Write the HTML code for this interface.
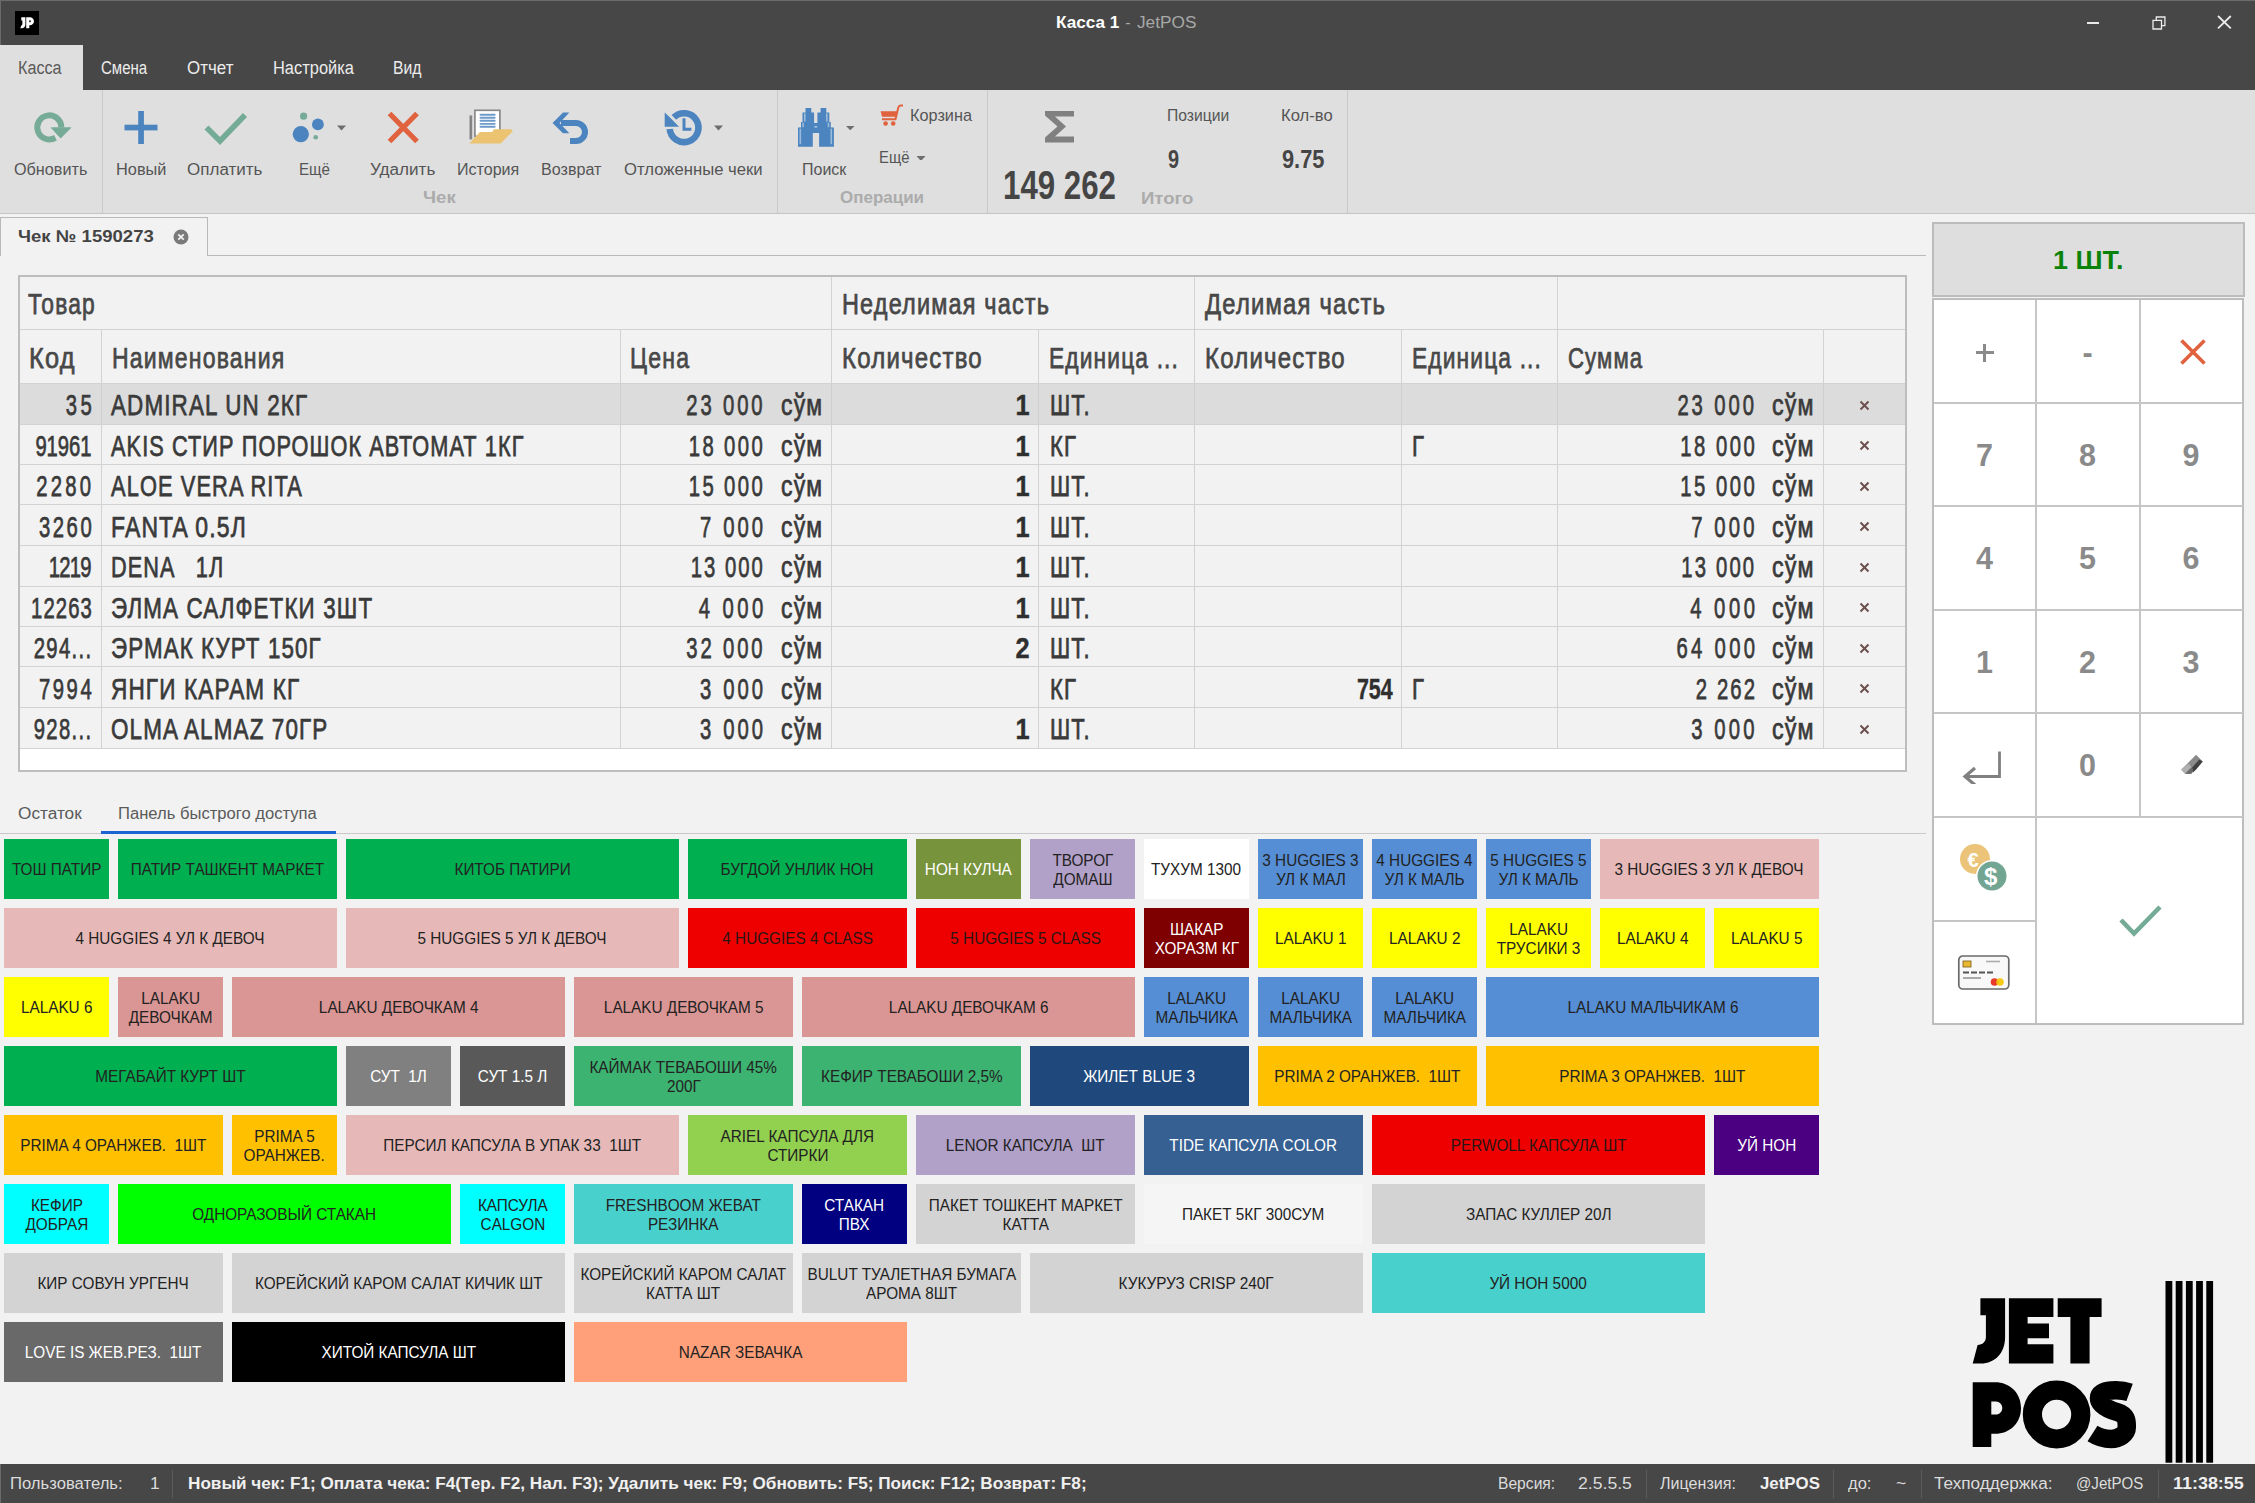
<!DOCTYPE html>
<html><head><meta charset="utf-8"><style>
html,body{margin:0;padding:0;width:2255px;height:1503px;overflow:hidden;background:#f2f2f2}
body{position:relative;font-family:"Liberation Sans",sans-serif}
body>div,body>svg{position:absolute}
.t{white-space:pre}
.t span{display:inline-block}
</style></head><body>
<div style="left:0px;top:0px;width:2255px;height:90px;background:#474747;"></div>
<div style="left:0px;top:0px;width:2255px;height:1px;background:#6a6a6a;"></div>
<div style="left:0px;top:0px;width:1px;height:90px;background:#6a6a6a;"></div>
<div style="left:15px;top:11px;width:24px;height:24px;background:#000;"></div>
<svg style="left:15px;top:11px" width="24" height="24" viewBox="15 11 24 24"><path d="M21.3 17.3H25.4V24.5C25.4 26.8 23.8 28.2 21.6 28.2H20.3L21.3 25.4C22 25.2 22.4 24.7 22.4 24V20.5H21.3Z" fill="#fff"/><path fill="#fff" fill-rule="evenodd" d="M26.2 17.3H29.8C32.3 17.3 34 19 34 21.3C34 23.6 32.3 25.3 29.8 25.3H29.3V28.2H26.2Z M29.3 20.3H29.7C30.4 20.3 30.9 20.8 30.9 21.3C30.9 21.8 30.4 22.3 29.7 22.3H29.3Z"/></svg>
<div class="t" style="left:1056.40px;top:14.56px;width:2000px;text-align:left;font-size:16px;line-height:16px;font-weight:bold;color:#ffffff;"><span style="transform:scaleX(1.0730);transform-origin:0 0">Касса 1</span></div>
<div class="t" style="left:1125.30px;top:14.56px;width:2000px;text-align:left;font-size:16px;line-height:16px;font-weight:normal;color:#a8a8a8;"><span style="transform:scaleX(1.0000);transform-origin:0 0">-</span></div>
<div class="t" style="left:1137.40px;top:14.56px;width:2000px;text-align:left;font-size:16px;line-height:16px;font-weight:normal;color:#a8a8a8;"><span style="transform:scaleX(1.0774);transform-origin:0 0">JetPOS</span></div>
<div style="left:2086.5px;top:22.3px;width:12.2px;height:1.8px;background:#e8e8e8;"></div>
<svg style="left:2150px;top:14px" width="18" height="18" viewBox="0 0 18 18"><path d="M3 6.4h8.5v8.6H3z M6.3 6.4V3h8.6v8.6h-3.4" fill="none" stroke="#ececec" stroke-width="1.3"/></svg>
<svg style="left:2214px;top:13.4px" width="18" height="18" viewBox="0 0 18 18"><path d="M4 3L16.8 15.3M16.8 3L4 15.3" stroke="#ececec" stroke-width="1.8"/></svg>
<div style="left:0px;top:45px;width:83px;height:45px;background:#dfdfdf;"></div>
<div class="t" style="left:18.40px;top:58.56px;width:2000px;text-align:left;font-size:18px;line-height:18px;font-weight:normal;color:#5a5a5a;"><span style="transform:scaleX(0.8989);transform-origin:0 0">Касса</span></div>
<div class="t" style="left:101.00px;top:58.56px;width:2000px;text-align:left;font-size:18px;line-height:18px;font-weight:normal;color:#ececec;"><span style="transform:scaleX(0.8349);transform-origin:0 0">Смена</span></div>
<div class="t" style="left:187.00px;top:58.56px;width:2000px;text-align:left;font-size:18px;line-height:18px;font-weight:normal;color:#ececec;"><span style="transform:scaleX(0.9416);transform-origin:0 0">Отчет</span></div>
<div class="t" style="left:273.10px;top:58.56px;width:2000px;text-align:left;font-size:18px;line-height:18px;font-weight:normal;color:#ececec;"><span style="transform:scaleX(0.9130);transform-origin:0 0">Настройка</span></div>
<div class="t" style="left:393.00px;top:58.56px;width:2000px;text-align:left;font-size:18px;line-height:18px;font-weight:normal;color:#ececec;"><span style="transform:scaleX(0.8722);transform-origin:0 0">Вид</span></div>
<div style="left:0px;top:90px;width:2255px;height:124px;background:#dfdfdf;"></div>
<div style="left:0px;top:213px;width:2255px;height:1px;background:#c4c4c4;"></div>
<div style="left:102px;top:90px;width:1px;height:123px;background:#c9c9c9;"></div>
<div style="left:777px;top:90px;width:1px;height:123px;background:#c9c9c9;"></div>
<div style="left:987px;top:90px;width:1px;height:123px;background:#c9c9c9;"></div>
<div style="left:1347px;top:90px;width:1px;height:123px;background:#c9c9c9;"></div>
<div class="t" style="left:13.60px;top:160.86px;width:2000px;text-align:left;font-size:17.3px;line-height:17.3px;font-weight:normal;color:#555555;"><span style="transform:scaleX(0.9371);transform-origin:0 0">Обновить</span></div>
<div class="t" style="left:115.50px;top:160.86px;width:2000px;text-align:left;font-size:17.3px;line-height:17.3px;font-weight:normal;color:#555555;"><span style="transform:scaleX(0.9456);transform-origin:0 0">Новый</span></div>
<div class="t" style="left:186.50px;top:160.86px;width:2000px;text-align:left;font-size:17.3px;line-height:17.3px;font-weight:normal;color:#555555;"><span style="transform:scaleX(0.9846);transform-origin:0 0">Оплатить</span></div>
<div class="t" style="left:299.00px;top:160.86px;width:2000px;text-align:left;font-size:17.3px;line-height:17.3px;font-weight:normal;color:#555555;"><span style="transform:scaleX(0.8758);transform-origin:0 0">Ещё</span></div>
<div class="t" style="left:370.00px;top:160.86px;width:2000px;text-align:left;font-size:17.3px;line-height:17.3px;font-weight:normal;color:#555555;"><span style="transform:scaleX(0.9902);transform-origin:0 0">Удалить</span></div>
<div class="t" style="left:456.90px;top:160.86px;width:2000px;text-align:left;font-size:17.3px;line-height:17.3px;font-weight:normal;color:#555555;"><span style="transform:scaleX(0.9287);transform-origin:0 0">История</span></div>
<div class="t" style="left:540.70px;top:160.86px;width:2000px;text-align:left;font-size:17.3px;line-height:17.3px;font-weight:normal;color:#555555;"><span style="transform:scaleX(0.9326);transform-origin:0 0">Возврат</span></div>
<div class="t" style="left:623.50px;top:160.86px;width:2000px;text-align:left;font-size:17.3px;line-height:17.3px;font-weight:normal;color:#555555;"><span style="transform:scaleX(0.9657);transform-origin:0 0">Отложенные чеки</span></div>
<div class="t" style="left:423.30px;top:189.21px;width:2000px;text-align:left;font-size:17px;line-height:17px;font-weight:bold;color:#ababab;"><span style="transform:scaleX(1.0934);transform-origin:0 0">Чек</span></div>
<div class="t" style="left:802.00px;top:160.86px;width:2000px;text-align:left;font-size:17.3px;line-height:17.3px;font-weight:normal;color:#555555;"><span style="transform:scaleX(0.9262);transform-origin:0 0">Поиск</span></div>
<div class="t" style="left:910.00px;top:107.21px;width:2000px;text-align:left;font-size:17px;line-height:17px;font-weight:normal;color:#555555;"><span style="transform:scaleX(0.9575);transform-origin:0 0">Корзина</span></div>
<div class="t" style="left:878.80px;top:149.21px;width:2000px;text-align:left;font-size:17px;line-height:17px;font-weight:normal;color:#555555;"><span style="transform:scaleX(0.8740);transform-origin:0 0">Ещё</span></div>
<div class="t" style="left:840.00px;top:189.41px;width:2000px;text-align:left;font-size:17px;line-height:17px;font-weight:bold;color:#ababab;"><span style="transform:scaleX(0.9984);transform-origin:0 0">Операции</span></div>
<div class="t" style="left:1141.30px;top:189.61px;width:2000px;text-align:left;font-size:17px;line-height:17px;font-weight:bold;color:#ababab;"><span style="transform:scaleX(1.0929);transform-origin:0 0">Итого</span></div>
<div class="t" style="left:1166.80px;top:107.11px;width:2000px;text-align:left;font-size:17px;line-height:17px;font-weight:normal;color:#555555;"><span style="transform:scaleX(0.9230);transform-origin:0 0">Позиции</span></div>
<div class="t" style="left:1280.70px;top:107.11px;width:2000px;text-align:left;font-size:17px;line-height:17px;font-weight:normal;color:#555555;"><span style="transform:scaleX(0.9763);transform-origin:0 0">Кол-во</span></div>
<div class="t" style="left:1002.50px;top:165.14px;width:2000px;text-align:left;font-size:40px;line-height:40px;font-weight:bold;color:#454545;"><span style="transform:scaleX(0.7816);transform-origin:0 0">149 262</span></div>
<div class="t" style="left:1167.60px;top:146.48px;width:2000px;text-align:left;font-size:26.6px;line-height:26.6px;font-weight:bold;color:#454545;"><span style="transform:scaleX(0.7504);transform-origin:0 0">9</span></div>
<div class="t" style="left:1281.90px;top:146.48px;width:2000px;text-align:left;font-size:26.6px;line-height:26.6px;font-weight:bold;color:#454545;"><span style="transform:scaleX(0.8191);transform-origin:0 0">9.75</span></div>
<div style="left:0px;top:214px;width:2255px;height:1250px;background:#f2f2f2;"></div>
<div style="left:0px;top:255px;width:1926px;height:1px;background:#b9b9b9;"></div>
<div style="left:0px;top:217px;width:208px;height:39px;background:#f2f2f2;border:1px solid #b9b9b9;border-bottom:none;box-sizing:border-box"></div>
<div class="t" style="left:18.00px;top:228.41px;width:2000px;text-align:left;font-size:17px;line-height:17px;font-weight:bold;color:#444;"><span style="transform:scaleX(1.0910);transform-origin:0 0">Чек № 1590273</span></div>
<svg style="left:173px;top:229px" width="16" height="16" viewBox="0 0 16 16"><circle cx="8" cy="8" r="7.5" fill="#7a7a7a"/><path d="M5.3 5.3L10.7 10.7M10.7 5.3L5.3 10.7" stroke="#f2f2f2" stroke-width="1.8"/></svg>
<div style="left:18px;top:275px;width:1889px;height:497px;background:#f2f2f2;border:2px solid #bdbdbd;box-sizing:border-box"></div>
<div style="left:20px;top:748px;width:1885px;height:22px;background:#ffffff;"></div>
<div style="left:20px;top:329px;width:1885px;height:1px;background:#d2d2d2;"></div>
<div style="left:20px;top:383px;width:1885px;height:1px;background:#d2d2d2;"></div>
<div style="left:831px;top:277px;width:1px;height:52px;background:#d2d2d2;"></div>
<div style="left:1194px;top:277px;width:1px;height:52px;background:#d2d2d2;"></div>
<div style="left:1557px;top:277px;width:1px;height:52px;background:#d2d2d2;"></div>
<div style="left:101px;top:330px;width:1px;height:418px;background:#d2d2d2;"></div>
<div style="left:620px;top:330px;width:1px;height:418px;background:#d2d2d2;"></div>
<div style="left:831px;top:330px;width:1px;height:418px;background:#d2d2d2;"></div>
<div style="left:1038px;top:330px;width:1px;height:418px;background:#d2d2d2;"></div>
<div style="left:1194px;top:330px;width:1px;height:418px;background:#d2d2d2;"></div>
<div style="left:1401px;top:330px;width:1px;height:418px;background:#d2d2d2;"></div>
<div style="left:1557px;top:330px;width:1px;height:418px;background:#d2d2d2;"></div>
<div style="left:1823px;top:330px;width:1px;height:418px;background:#d2d2d2;"></div>
<div style="left:20px;top:384px;width:1885px;height:40px;background:#dcdcdc"></div>
<div style="left:101px;top:384px;width:1px;height:40px;background:#cfcfcf;"></div>
<div style="left:620px;top:384px;width:1px;height:40px;background:#cfcfcf;"></div>
<div style="left:831px;top:384px;width:1px;height:40px;background:#cfcfcf;"></div>
<div style="left:1038px;top:384px;width:1px;height:40px;background:#cfcfcf;"></div>
<div style="left:1194px;top:384px;width:1px;height:40px;background:#cfcfcf;"></div>
<div style="left:1401px;top:384px;width:1px;height:40px;background:#cfcfcf;"></div>
<div style="left:1557px;top:384px;width:1px;height:40px;background:#cfcfcf;"></div>
<div style="left:1823px;top:384px;width:1px;height:40px;background:#cfcfcf;"></div>
<div style="left:20px;top:424px;width:1885px;height:1px;background:#d2d2d2;"></div>
<div style="left:20px;top:464px;width:1885px;height:1px;background:#d2d2d2;"></div>
<div style="left:20px;top:504px;width:1885px;height:1px;background:#d2d2d2;"></div>
<div style="left:20px;top:545px;width:1885px;height:1px;background:#d2d2d2;"></div>
<div style="left:20px;top:586px;width:1885px;height:1px;background:#d2d2d2;"></div>
<div style="left:20px;top:626px;width:1885px;height:1px;background:#d2d2d2;"></div>
<div style="left:20px;top:666px;width:1885px;height:1px;background:#d2d2d2;"></div>
<div style="left:20px;top:707px;width:1885px;height:1px;background:#d2d2d2;"></div>
<div style="left:20px;top:748px;width:1885px;height:1px;background:#d2d2d2;"></div>
<div class="t" style="left:-1905.04px;top:390.27px;width:2000px;text-align:right;font-size:29.8px;line-height:29.8px;font-weight:normal;color:#3a3a3a;letter-spacing:5.092px;-webkit-text-stroke:0.75px #3a3a3a"><span style="transform:scaleX(0.6800);transform-origin:100% 0">35</span></div>
<div class="t" style="left:111.40px;top:390.27px;width:2000px;text-align:left;font-size:29.8px;line-height:29.8px;font-weight:normal;color:#3a3a3a;letter-spacing:1.500px;-webkit-text-stroke:0.75px #3a3a3a"><span style="transform:scaleX(0.7531);transform-origin:0 0">ADMIRAL UN 2КГ</span></div>
<div class="t" style="left:-1234.43px;top:390.27px;width:2000px;text-align:right;font-size:29.8px;line-height:29.8px;font-weight:normal;color:#3a3a3a;letter-spacing:4.214px;-webkit-text-stroke:0.75px #3a3a3a"><span style="transform:scaleX(0.6800);transform-origin:100% 0">23 000</span></div>
<div class="t" style="left:780.80px;top:390.27px;width:2000px;text-align:left;font-size:29.8px;line-height:29.8px;font-weight:normal;color:#3a3a3a;letter-spacing:1.500px;-webkit-text-stroke:0.75px #3a3a3a"><span style="transform:scaleX(0.7713);transform-origin:0 0">сўм</span></div>
<div class="t" style="left:-970.50px;top:390.27px;width:2000px;text-align:right;font-size:29.8px;line-height:29.8px;font-weight:bold;color:#2f2f2f;-webkit-text-stroke:0.4px #2f2f2f"><span style="transform:scaleX(0.8500);transform-origin:100% 0">1</span></div>
<div class="t" style="left:1050.10px;top:390.27px;width:2000px;text-align:left;font-size:29.8px;line-height:29.8px;font-weight:normal;color:#3a3a3a;letter-spacing:1.500px;-webkit-text-stroke:0.75px #3a3a3a"><span style="transform:scaleX(0.7400);transform-origin:0 0">ШТ.</span></div>
<div class="t" style="left:-242.57px;top:390.27px;width:2000px;text-align:right;font-size:29.8px;line-height:29.8px;font-weight:normal;color:#3a3a3a;letter-spacing:4.302px;-webkit-text-stroke:0.75px #3a3a3a"><span style="transform:scaleX(0.6800);transform-origin:100% 0">23 000</span></div>
<div class="t" style="left:1771.70px;top:390.27px;width:2000px;text-align:left;font-size:29.8px;line-height:29.8px;font-weight:normal;color:#3a3a3a;letter-spacing:1.500px;-webkit-text-stroke:0.75px #3a3a3a"><span style="transform:scaleX(0.7807);transform-origin:0 0">сўм</span></div>
<svg style="left:1859px;top:399.5px" width="11" height="11" viewBox="0 0 11 11"><path d="M1.5 1.5L9.5 9.5M9.5 1.5L1.5 9.5" stroke="#6e4f4f" stroke-width="2"/></svg>
<div class="t" style="left:-1908.56px;top:430.77px;width:2000px;text-align:right;font-size:29.8px;line-height:29.8px;font-weight:normal;color:#3a3a3a;letter-spacing:-0.089px;-webkit-text-stroke:0.75px #3a3a3a"><span style="transform:scaleX(0.6800);transform-origin:100% 0">91961</span></div>
<div class="t" style="left:111.40px;top:430.77px;width:2000px;text-align:left;font-size:29.8px;line-height:29.8px;font-weight:normal;color:#3a3a3a;letter-spacing:1.500px;-webkit-text-stroke:0.75px #3a3a3a"><span style="transform:scaleX(0.7283);transform-origin:0 0">AKIS СТИР ПОРОШОК АВТОМАТ 1КГ</span></div>
<div class="t" style="left:-1234.93px;top:430.77px;width:2000px;text-align:right;font-size:29.8px;line-height:29.8px;font-weight:normal;color:#3a3a3a;letter-spacing:3.479px;-webkit-text-stroke:0.75px #3a3a3a"><span style="transform:scaleX(0.6800);transform-origin:100% 0">18 000</span></div>
<div class="t" style="left:780.80px;top:430.77px;width:2000px;text-align:left;font-size:29.8px;line-height:29.8px;font-weight:normal;color:#3a3a3a;letter-spacing:1.500px;-webkit-text-stroke:0.75px #3a3a3a"><span style="transform:scaleX(0.7713);transform-origin:0 0">сўм</span></div>
<div class="t" style="left:-970.50px;top:430.77px;width:2000px;text-align:right;font-size:29.8px;line-height:29.8px;font-weight:bold;color:#2f2f2f;-webkit-text-stroke:0.4px #2f2f2f"><span style="transform:scaleX(0.8500);transform-origin:100% 0">1</span></div>
<div class="t" style="left:1050.10px;top:430.77px;width:2000px;text-align:left;font-size:29.8px;line-height:29.8px;font-weight:normal;color:#3a3a3a;letter-spacing:1.500px;-webkit-text-stroke:0.75px #3a3a3a"><span style="transform:scaleX(0.7400);transform-origin:0 0">КГ</span></div>
<div class="t" style="left:1411.90px;top:430.77px;width:2000px;text-align:left;font-size:29.8px;line-height:29.8px;font-weight:normal;color:#3a3a3a;letter-spacing:1.500px;-webkit-text-stroke:0.75px #3a3a3a"><span style="transform:scaleX(0.7400);transform-origin:0 0">Г</span></div>
<div class="t" style="left:-242.99px;top:430.77px;width:2000px;text-align:right;font-size:29.8px;line-height:29.8px;font-weight:normal;color:#3a3a3a;letter-spacing:3.684px;-webkit-text-stroke:0.75px #3a3a3a"><span style="transform:scaleX(0.6800);transform-origin:100% 0">18 000</span></div>
<div class="t" style="left:1771.70px;top:430.77px;width:2000px;text-align:left;font-size:29.8px;line-height:29.8px;font-weight:normal;color:#3a3a3a;letter-spacing:1.500px;-webkit-text-stroke:0.75px #3a3a3a"><span style="transform:scaleX(0.7807);transform-origin:0 0">сўм</span></div>
<svg style="left:1859px;top:440.0px" width="11" height="11" viewBox="0 0 11 11"><path d="M1.5 1.5L9.5 9.5M9.5 1.5L1.5 9.5" stroke="#6e4f4f" stroke-width="2"/></svg>
<div class="t" style="left:-1905.26px;top:471.27px;width:2000px;text-align:right;font-size:29.8px;line-height:29.8px;font-weight:normal;color:#3a3a3a;letter-spacing:4.767px;-webkit-text-stroke:0.75px #3a3a3a"><span style="transform:scaleX(0.6800);transform-origin:100% 0">2280</span></div>
<div class="t" style="left:111.40px;top:471.27px;width:2000px;text-align:left;font-size:29.8px;line-height:29.8px;font-weight:normal;color:#3a3a3a;letter-spacing:1.500px;-webkit-text-stroke:0.75px #3a3a3a"><span style="transform:scaleX(0.7321);transform-origin:0 0">ALOE VERA RITA</span></div>
<div class="t" style="left:-1234.93px;top:471.27px;width:2000px;text-align:right;font-size:29.8px;line-height:29.8px;font-weight:normal;color:#3a3a3a;letter-spacing:3.479px;-webkit-text-stroke:0.75px #3a3a3a"><span style="transform:scaleX(0.6800);transform-origin:100% 0">15 000</span></div>
<div class="t" style="left:780.80px;top:471.27px;width:2000px;text-align:left;font-size:29.8px;line-height:29.8px;font-weight:normal;color:#3a3a3a;letter-spacing:1.500px;-webkit-text-stroke:0.75px #3a3a3a"><span style="transform:scaleX(0.7713);transform-origin:0 0">сўм</span></div>
<div class="t" style="left:-970.50px;top:471.27px;width:2000px;text-align:right;font-size:29.8px;line-height:29.8px;font-weight:bold;color:#2f2f2f;-webkit-text-stroke:0.4px #2f2f2f"><span style="transform:scaleX(0.8500);transform-origin:100% 0">1</span></div>
<div class="t" style="left:1050.10px;top:471.27px;width:2000px;text-align:left;font-size:29.8px;line-height:29.8px;font-weight:normal;color:#3a3a3a;letter-spacing:1.500px;-webkit-text-stroke:0.75px #3a3a3a"><span style="transform:scaleX(0.7400);transform-origin:0 0">ШТ.</span></div>
<div class="t" style="left:-242.99px;top:471.27px;width:2000px;text-align:right;font-size:29.8px;line-height:29.8px;font-weight:normal;color:#3a3a3a;letter-spacing:3.684px;-webkit-text-stroke:0.75px #3a3a3a"><span style="transform:scaleX(0.6800);transform-origin:100% 0">15 000</span></div>
<div class="t" style="left:1771.70px;top:471.27px;width:2000px;text-align:left;font-size:29.8px;line-height:29.8px;font-weight:normal;color:#3a3a3a;letter-spacing:1.500px;-webkit-text-stroke:0.75px #3a3a3a"><span style="transform:scaleX(0.7807);transform-origin:0 0">сўм</span></div>
<svg style="left:1859px;top:480.5px" width="11" height="11" viewBox="0 0 11 11"><path d="M1.5 1.5L9.5 9.5M9.5 1.5L1.5 9.5" stroke="#6e4f4f" stroke-width="2"/></svg>
<div class="t" style="left:-1905.96px;top:511.77px;width:2000px;text-align:right;font-size:29.8px;line-height:29.8px;font-weight:normal;color:#3a3a3a;letter-spacing:3.738px;-webkit-text-stroke:0.75px #3a3a3a"><span style="transform:scaleX(0.6800);transform-origin:100% 0">3260</span></div>
<div class="t" style="left:111.40px;top:511.77px;width:2000px;text-align:left;font-size:29.8px;line-height:29.8px;font-weight:normal;color:#3a3a3a;letter-spacing:1.500px;-webkit-text-stroke:0.75px #3a3a3a"><span style="transform:scaleX(0.7706);transform-origin:0 0">FANTA 0.5Л</span></div>
<div class="t" style="left:-1234.23px;top:511.77px;width:2000px;text-align:right;font-size:29.8px;line-height:29.8px;font-weight:normal;color:#3a3a3a;letter-spacing:4.520px;-webkit-text-stroke:0.75px #3a3a3a"><span style="transform:scaleX(0.6800);transform-origin:100% 0">7 000</span></div>
<div class="t" style="left:780.80px;top:511.77px;width:2000px;text-align:left;font-size:29.8px;line-height:29.8px;font-weight:normal;color:#3a3a3a;letter-spacing:1.500px;-webkit-text-stroke:0.75px #3a3a3a"><span style="transform:scaleX(0.7713);transform-origin:0 0">сўм</span></div>
<div class="t" style="left:-970.50px;top:511.77px;width:2000px;text-align:right;font-size:29.8px;line-height:29.8px;font-weight:bold;color:#2f2f2f;-webkit-text-stroke:0.4px #2f2f2f"><span style="transform:scaleX(0.8500);transform-origin:100% 0">1</span></div>
<div class="t" style="left:1050.10px;top:511.77px;width:2000px;text-align:left;font-size:29.8px;line-height:29.8px;font-weight:normal;color:#3a3a3a;letter-spacing:1.500px;-webkit-text-stroke:0.75px #3a3a3a"><span style="transform:scaleX(0.7400);transform-origin:0 0">ШТ.</span></div>
<div class="t" style="left:-242.38px;top:511.77px;width:2000px;text-align:right;font-size:29.8px;line-height:29.8px;font-weight:normal;color:#3a3a3a;letter-spacing:4.594px;-webkit-text-stroke:0.75px #3a3a3a"><span style="transform:scaleX(0.6800);transform-origin:100% 0">7 000</span></div>
<div class="t" style="left:1771.70px;top:511.77px;width:2000px;text-align:left;font-size:29.8px;line-height:29.8px;font-weight:normal;color:#3a3a3a;letter-spacing:1.500px;-webkit-text-stroke:0.75px #3a3a3a"><span style="transform:scaleX(0.7807);transform-origin:0 0">сўм</span></div>
<svg style="left:1859px;top:521.0px" width="11" height="11" viewBox="0 0 11 11"><path d="M1.5 1.5L9.5 9.5M9.5 1.5L1.5 9.5" stroke="#6e4f4f" stroke-width="2"/></svg>
<div class="t" style="left:-1909.26px;top:552.27px;width:2000px;text-align:right;font-size:29.8px;line-height:29.8px;font-weight:normal;color:#3a3a3a;letter-spacing:-1.115px;-webkit-text-stroke:0.75px #3a3a3a"><span style="transform:scaleX(0.6800);transform-origin:100% 0">1219</span></div>
<div class="t" style="left:111.40px;top:552.27px;width:2000px;text-align:left;font-size:29.8px;line-height:29.8px;font-weight:normal;color:#3a3a3a;letter-spacing:1.500px;-webkit-text-stroke:0.75px #3a3a3a"><span style="transform:scaleX(0.7280);transform-origin:0 0">DENA   1Л</span></div>
<div class="t" style="left:-1235.29px;top:552.27px;width:2000px;text-align:right;font-size:29.8px;line-height:29.8px;font-weight:normal;color:#3a3a3a;letter-spacing:2.949px;-webkit-text-stroke:0.75px #3a3a3a"><span style="transform:scaleX(0.6800);transform-origin:100% 0">13 000</span></div>
<div class="t" style="left:780.80px;top:552.27px;width:2000px;text-align:left;font-size:29.8px;line-height:29.8px;font-weight:normal;color:#3a3a3a;letter-spacing:1.500px;-webkit-text-stroke:0.75px #3a3a3a"><span style="transform:scaleX(0.7713);transform-origin:0 0">сўм</span></div>
<div class="t" style="left:-970.50px;top:552.27px;width:2000px;text-align:right;font-size:29.8px;line-height:29.8px;font-weight:bold;color:#2f2f2f;-webkit-text-stroke:0.4px #2f2f2f"><span style="transform:scaleX(0.8500);transform-origin:100% 0">1</span></div>
<div class="t" style="left:1050.10px;top:552.27px;width:2000px;text-align:left;font-size:29.8px;line-height:29.8px;font-weight:normal;color:#3a3a3a;letter-spacing:1.500px;-webkit-text-stroke:0.75px #3a3a3a"><span style="transform:scaleX(0.7400);transform-origin:0 0">ШТ.</span></div>
<div class="t" style="left:-243.33px;top:552.27px;width:2000px;text-align:right;font-size:29.8px;line-height:29.8px;font-weight:normal;color:#3a3a3a;letter-spacing:3.184px;-webkit-text-stroke:0.75px #3a3a3a"><span style="transform:scaleX(0.6800);transform-origin:100% 0">13 000</span></div>
<div class="t" style="left:1771.70px;top:552.27px;width:2000px;text-align:left;font-size:29.8px;line-height:29.8px;font-weight:normal;color:#3a3a3a;letter-spacing:1.500px;-webkit-text-stroke:0.75px #3a3a3a"><span style="transform:scaleX(0.7807);transform-origin:0 0">сўм</span></div>
<svg style="left:1859px;top:561.5px" width="11" height="11" viewBox="0 0 11 11"><path d="M1.5 1.5L9.5 9.5M9.5 1.5L1.5 9.5" stroke="#6e4f4f" stroke-width="2"/></svg>
<div class="t" style="left:-1907.41px;top:592.77px;width:2000px;text-align:right;font-size:29.8px;line-height:29.8px;font-weight:normal;color:#3a3a3a;letter-spacing:1.602px;-webkit-text-stroke:0.75px #3a3a3a"><span style="transform:scaleX(0.6800);transform-origin:100% 0">12263</span></div>
<div class="t" style="left:111.40px;top:592.77px;width:2000px;text-align:left;font-size:29.8px;line-height:29.8px;font-weight:normal;color:#3a3a3a;letter-spacing:1.500px;-webkit-text-stroke:0.75px #3a3a3a"><span style="transform:scaleX(0.7514);transform-origin:0 0">ЭЛМА САЛФЕТКИ 3ШТ</span></div>
<div class="t" style="left:-1233.90px;top:592.77px;width:2000px;text-align:right;font-size:29.8px;line-height:29.8px;font-weight:normal;color:#3a3a3a;letter-spacing:4.998px;-webkit-text-stroke:0.75px #3a3a3a"><span style="transform:scaleX(0.6800);transform-origin:100% 0">4 000</span></div>
<div class="t" style="left:780.80px;top:592.77px;width:2000px;text-align:left;font-size:29.8px;line-height:29.8px;font-weight:normal;color:#3a3a3a;letter-spacing:1.500px;-webkit-text-stroke:0.75px #3a3a3a"><span style="transform:scaleX(0.7713);transform-origin:0 0">сўм</span></div>
<div class="t" style="left:-970.50px;top:592.77px;width:2000px;text-align:right;font-size:29.8px;line-height:29.8px;font-weight:bold;color:#2f2f2f;-webkit-text-stroke:0.4px #2f2f2f"><span style="transform:scaleX(0.8500);transform-origin:100% 0">1</span></div>
<div class="t" style="left:1050.10px;top:592.77px;width:2000px;text-align:left;font-size:29.8px;line-height:29.8px;font-weight:normal;color:#3a3a3a;letter-spacing:1.500px;-webkit-text-stroke:0.75px #3a3a3a"><span style="transform:scaleX(0.7400);transform-origin:0 0">ШТ.</span></div>
<div class="t" style="left:-241.98px;top:592.77px;width:2000px;text-align:right;font-size:29.8px;line-height:29.8px;font-weight:normal;color:#3a3a3a;letter-spacing:5.182px;-webkit-text-stroke:0.75px #3a3a3a"><span style="transform:scaleX(0.6800);transform-origin:100% 0">4 000</span></div>
<div class="t" style="left:1771.70px;top:592.77px;width:2000px;text-align:left;font-size:29.8px;line-height:29.8px;font-weight:normal;color:#3a3a3a;letter-spacing:1.500px;-webkit-text-stroke:0.75px #3a3a3a"><span style="transform:scaleX(0.7807);transform-origin:0 0">сўм</span></div>
<svg style="left:1859px;top:602.0px" width="11" height="11" viewBox="0 0 11 11"><path d="M1.5 1.5L9.5 9.5M9.5 1.5L1.5 9.5" stroke="#6e4f4f" stroke-width="2"/></svg>
<div class="t" style="left:-1907.14px;top:633.27px;width:2000px;text-align:right;font-size:29.8px;line-height:29.8px;font-weight:normal;color:#3a3a3a;letter-spacing:2.002px;-webkit-text-stroke:0.75px #3a3a3a"><span style="transform:scaleX(0.6800);transform-origin:100% 0">294...</span></div>
<div class="t" style="left:111.40px;top:633.27px;width:2000px;text-align:left;font-size:29.8px;line-height:29.8px;font-weight:normal;color:#3a3a3a;letter-spacing:1.500px;-webkit-text-stroke:0.75px #3a3a3a"><span style="transform:scaleX(0.7491);transform-origin:0 0">ЭРМАК КУРТ 150Г</span></div>
<div class="t" style="left:-1234.43px;top:633.27px;width:2000px;text-align:right;font-size:29.8px;line-height:29.8px;font-weight:normal;color:#3a3a3a;letter-spacing:4.214px;-webkit-text-stroke:0.75px #3a3a3a"><span style="transform:scaleX(0.6800);transform-origin:100% 0">32 000</span></div>
<div class="t" style="left:780.80px;top:633.27px;width:2000px;text-align:left;font-size:29.8px;line-height:29.8px;font-weight:normal;color:#3a3a3a;letter-spacing:1.500px;-webkit-text-stroke:0.75px #3a3a3a"><span style="transform:scaleX(0.7713);transform-origin:0 0">сўм</span></div>
<div class="t" style="left:-970.50px;top:633.27px;width:2000px;text-align:right;font-size:29.8px;line-height:29.8px;font-weight:bold;color:#2f2f2f;-webkit-text-stroke:0.4px #2f2f2f"><span style="transform:scaleX(0.8500);transform-origin:100% 0">2</span></div>
<div class="t" style="left:1050.10px;top:633.27px;width:2000px;text-align:left;font-size:29.8px;line-height:29.8px;font-weight:normal;color:#3a3a3a;letter-spacing:1.500px;-webkit-text-stroke:0.75px #3a3a3a"><span style="transform:scaleX(0.7400);transform-origin:0 0">ШТ.</span></div>
<div class="t" style="left:-242.19px;top:633.27px;width:2000px;text-align:right;font-size:29.8px;line-height:29.8px;font-weight:normal;color:#3a3a3a;letter-spacing:4.861px;-webkit-text-stroke:0.75px #3a3a3a"><span style="transform:scaleX(0.6800);transform-origin:100% 0">64 000</span></div>
<div class="t" style="left:1771.70px;top:633.27px;width:2000px;text-align:left;font-size:29.8px;line-height:29.8px;font-weight:normal;color:#3a3a3a;letter-spacing:1.500px;-webkit-text-stroke:0.75px #3a3a3a"><span style="transform:scaleX(0.7807);transform-origin:0 0">сўм</span></div>
<svg style="left:1859px;top:642.5px" width="11" height="11" viewBox="0 0 11 11"><path d="M1.5 1.5L9.5 9.5M9.5 1.5L1.5 9.5" stroke="#6e4f4f" stroke-width="2"/></svg>
<div class="t" style="left:-1905.96px;top:673.77px;width:2000px;text-align:right;font-size:29.8px;line-height:29.8px;font-weight:normal;color:#3a3a3a;letter-spacing:3.738px;-webkit-text-stroke:0.75px #3a3a3a"><span style="transform:scaleX(0.6800);transform-origin:100% 0">7994</span></div>
<div class="t" style="left:111.40px;top:673.77px;width:2000px;text-align:left;font-size:29.8px;line-height:29.8px;font-weight:normal;color:#3a3a3a;letter-spacing:1.500px;-webkit-text-stroke:0.75px #3a3a3a"><span style="transform:scaleX(0.7574);transform-origin:0 0">ЯНГИ КАРАМ КГ</span></div>
<div class="t" style="left:-1234.23px;top:673.77px;width:2000px;text-align:right;font-size:29.8px;line-height:29.8px;font-weight:normal;color:#3a3a3a;letter-spacing:4.520px;-webkit-text-stroke:0.75px #3a3a3a"><span style="transform:scaleX(0.6800);transform-origin:100% 0">3 000</span></div>
<div class="t" style="left:780.80px;top:673.77px;width:2000px;text-align:left;font-size:29.8px;line-height:29.8px;font-weight:normal;color:#3a3a3a;letter-spacing:1.500px;-webkit-text-stroke:0.75px #3a3a3a"><span style="transform:scaleX(0.7713);transform-origin:0 0">сўм</span></div>
<div class="t" style="left:1050.10px;top:673.77px;width:2000px;text-align:left;font-size:29.8px;line-height:29.8px;font-weight:normal;color:#3a3a3a;letter-spacing:1.500px;-webkit-text-stroke:0.75px #3a3a3a"><span style="transform:scaleX(0.7400);transform-origin:0 0">КГ</span></div>
<div class="t" style="left:-607.30px;top:673.77px;width:2000px;text-align:right;font-size:29.8px;line-height:29.8px;font-weight:bold;color:#2f2f2f;-webkit-text-stroke:0.4px #2f2f2f"><span style="transform:scaleX(0.7200);transform-origin:100% 0">754</span></div>
<div class="t" style="left:1411.90px;top:673.77px;width:2000px;text-align:left;font-size:29.8px;line-height:29.8px;font-weight:normal;color:#3a3a3a;letter-spacing:1.500px;-webkit-text-stroke:0.75px #3a3a3a"><span style="transform:scaleX(0.7400);transform-origin:0 0">Г</span></div>
<div class="t" style="left:-243.40px;top:673.77px;width:2000px;text-align:right;font-size:29.8px;line-height:29.8px;font-weight:normal;color:#3a3a3a;letter-spacing:3.087px;-webkit-text-stroke:0.75px #3a3a3a"><span style="transform:scaleX(0.6800);transform-origin:100% 0">2 262</span></div>
<div class="t" style="left:1771.70px;top:673.77px;width:2000px;text-align:left;font-size:29.8px;line-height:29.8px;font-weight:normal;color:#3a3a3a;letter-spacing:1.500px;-webkit-text-stroke:0.75px #3a3a3a"><span style="transform:scaleX(0.7807);transform-origin:0 0">сўм</span></div>
<svg style="left:1859px;top:683.0px" width="11" height="11" viewBox="0 0 11 11"><path d="M1.5 1.5L9.5 9.5M9.5 1.5L1.5 9.5" stroke="#6e4f4f" stroke-width="2"/></svg>
<div class="t" style="left:-1907.14px;top:714.27px;width:2000px;text-align:right;font-size:29.8px;line-height:29.8px;font-weight:normal;color:#3a3a3a;letter-spacing:2.002px;-webkit-text-stroke:0.75px #3a3a3a"><span style="transform:scaleX(0.6800);transform-origin:100% 0">928...</span></div>
<div class="t" style="left:111.40px;top:714.27px;width:2000px;text-align:left;font-size:29.8px;line-height:29.8px;font-weight:normal;color:#3a3a3a;letter-spacing:1.500px;-webkit-text-stroke:0.75px #3a3a3a"><span style="transform:scaleX(0.7531);transform-origin:0 0">OLMA ALMAZ 70ГР</span></div>
<div class="t" style="left:-1234.23px;top:714.27px;width:2000px;text-align:right;font-size:29.8px;line-height:29.8px;font-weight:normal;color:#3a3a3a;letter-spacing:4.520px;-webkit-text-stroke:0.75px #3a3a3a"><span style="transform:scaleX(0.6800);transform-origin:100% 0">3 000</span></div>
<div class="t" style="left:780.80px;top:714.27px;width:2000px;text-align:left;font-size:29.8px;line-height:29.8px;font-weight:normal;color:#3a3a3a;letter-spacing:1.500px;-webkit-text-stroke:0.75px #3a3a3a"><span style="transform:scaleX(0.7713);transform-origin:0 0">сўм</span></div>
<div class="t" style="left:-970.50px;top:714.27px;width:2000px;text-align:right;font-size:29.8px;line-height:29.8px;font-weight:bold;color:#2f2f2f;-webkit-text-stroke:0.4px #2f2f2f"><span style="transform:scaleX(0.8500);transform-origin:100% 0">1</span></div>
<div class="t" style="left:1050.10px;top:714.27px;width:2000px;text-align:left;font-size:29.8px;line-height:29.8px;font-weight:normal;color:#3a3a3a;letter-spacing:1.500px;-webkit-text-stroke:0.75px #3a3a3a"><span style="transform:scaleX(0.7400);transform-origin:0 0">ШТ.</span></div>
<div class="t" style="left:-242.38px;top:714.27px;width:2000px;text-align:right;font-size:29.8px;line-height:29.8px;font-weight:normal;color:#3a3a3a;letter-spacing:4.594px;-webkit-text-stroke:0.75px #3a3a3a"><span style="transform:scaleX(0.6800);transform-origin:100% 0">3 000</span></div>
<div class="t" style="left:1771.70px;top:714.27px;width:2000px;text-align:left;font-size:29.8px;line-height:29.8px;font-weight:normal;color:#3a3a3a;letter-spacing:1.500px;-webkit-text-stroke:0.75px #3a3a3a"><span style="transform:scaleX(0.7807);transform-origin:0 0">сўм</span></div>
<svg style="left:1859px;top:723.5px" width="11" height="11" viewBox="0 0 11 11"><path d="M1.5 1.5L9.5 9.5M9.5 1.5L1.5 9.5" stroke="#6e4f4f" stroke-width="2"/></svg>
<div class="t" style="left:28.00px;top:288.77px;width:2000px;text-align:left;font-size:29.8px;line-height:29.8px;font-weight:normal;color:#484848;letter-spacing:1.500px;-webkit-text-stroke:0.75px #484848"><span style="transform:scaleX(0.7659);transform-origin:0 0">Товар</span></div>
<div class="t" style="left:842.20px;top:288.77px;width:2000px;text-align:left;font-size:29.8px;line-height:29.8px;font-weight:normal;color:#484848;letter-spacing:1.500px;-webkit-text-stroke:0.75px #484848"><span style="transform:scaleX(0.7868);transform-origin:0 0">Неделимая часть</span></div>
<div class="t" style="left:1205.00px;top:288.77px;width:2000px;text-align:left;font-size:29.8px;line-height:29.8px;font-weight:normal;color:#484848;letter-spacing:1.500px;-webkit-text-stroke:0.75px #484848"><span style="transform:scaleX(0.7984);transform-origin:0 0">Делимая часть</span></div>
<div class="t" style="left:28.90px;top:343.27px;width:2000px;text-align:left;font-size:29.8px;line-height:29.8px;font-weight:normal;color:#484848;letter-spacing:1.500px;-webkit-text-stroke:0.75px #484848"><span style="transform:scaleX(0.8498);transform-origin:0 0">Код</span></div>
<div class="t" style="left:111.80px;top:343.27px;width:2000px;text-align:left;font-size:29.8px;line-height:29.8px;font-weight:normal;color:#484848;letter-spacing:1.500px;-webkit-text-stroke:0.75px #484848"><span style="transform:scaleX(0.7735);transform-origin:0 0">Наименования</span></div>
<div class="t" style="left:630.00px;top:343.27px;width:2000px;text-align:left;font-size:29.8px;line-height:29.8px;font-weight:normal;color:#484848;letter-spacing:1.500px;-webkit-text-stroke:0.75px #484848"><span style="transform:scaleX(0.7749);transform-origin:0 0">Цена</span></div>
<div class="t" style="left:842.20px;top:343.27px;width:2000px;text-align:left;font-size:29.8px;line-height:29.8px;font-weight:normal;color:#484848;letter-spacing:1.500px;-webkit-text-stroke:0.75px #484848"><span style="transform:scaleX(0.8051);transform-origin:0 0">Количество</span></div>
<div class="t" style="left:1049.20px;top:343.27px;width:2000px;text-align:left;font-size:29.8px;line-height:29.8px;font-weight:normal;color:#484848;letter-spacing:1.500px;-webkit-text-stroke:0.75px #484848"><span style="transform:scaleX(0.7638);transform-origin:0 0">Единица ...</span></div>
<div class="t" style="left:1205.00px;top:343.27px;width:2000px;text-align:left;font-size:29.8px;line-height:29.8px;font-weight:normal;color:#484848;letter-spacing:1.500px;-webkit-text-stroke:0.75px #484848"><span style="transform:scaleX(0.8051);transform-origin:0 0">Количество</span></div>
<div class="t" style="left:1412.00px;top:343.27px;width:2000px;text-align:left;font-size:29.8px;line-height:29.8px;font-weight:normal;color:#484848;letter-spacing:1.500px;-webkit-text-stroke:0.75px #484848"><span style="transform:scaleX(0.7638);transform-origin:0 0">Единица ...</span></div>
<div class="t" style="left:1568.20px;top:343.27px;width:2000px;text-align:left;font-size:29.8px;line-height:29.8px;font-weight:normal;color:#484848;letter-spacing:1.500px;-webkit-text-stroke:0.75px #484848"><span style="transform:scaleX(0.7437);transform-origin:0 0">Сумма</span></div>
<div style="left:0px;top:833px;width:1926px;height:1px;background:#c9c9c9;"></div>
<div style="left:101px;top:831px;width:235px;height:3px;background:#1b64d1;"></div>
<div class="t" style="left:17.60px;top:804.66px;width:2000px;text-align:left;font-size:17.3px;line-height:17.3px;font-weight:normal;color:#5a5a5a;"><span style="transform:scaleX(0.9970);transform-origin:0 0">Остаток</span></div>
<div class="t" style="left:118.00px;top:804.66px;width:2000px;text-align:left;font-size:17.3px;line-height:17.3px;font-weight:normal;color:#5a5a5a;"><span style="transform:scaleX(0.9604);transform-origin:0 0">Панель быстрого доступа</span></div>
<div style="left:4px;top:839px;width:105px;height:60px;background:#00b050;"></div>
<div class="t" style="left:-943.50px;top:861.21px;width:2000px;text-align:center;font-size:17px;line-height:17px;font-weight:normal;color:#222;"><span style="transform:scaleX(0.9000);transform-origin:50% 0">ТОШ ПАТИР</span></div>
<div style="left:118px;top:839px;width:219px;height:60px;background:#00b050;"></div>
<div class="t" style="left:-772.50px;top:861.21px;width:2000px;text-align:center;font-size:17px;line-height:17px;font-weight:normal;color:#222;"><span style="transform:scaleX(0.9000);transform-origin:50% 0">ПАТИР ТАШКЕНТ МАРКЕТ</span></div>
<div style="left:346px;top:839px;width:333px;height:60px;background:#00b050;"></div>
<div class="t" style="left:-487.50px;top:861.21px;width:2000px;text-align:center;font-size:17px;line-height:17px;font-weight:normal;color:#222;"><span style="transform:scaleX(0.9000);transform-origin:50% 0">КИТОБ ПАТИРИ</span></div>
<div style="left:688px;top:839px;width:219px;height:60px;background:#00b050;"></div>
<div class="t" style="left:-202.50px;top:861.21px;width:2000px;text-align:center;font-size:17px;line-height:17px;font-weight:normal;color:#222;"><span style="transform:scaleX(0.9000);transform-origin:50% 0">БУГДОЙ УНЛИК НОН</span></div>
<div style="left:916px;top:839px;width:105px;height:60px;background:#77933c;"></div>
<div class="t" style="left:-31.50px;top:861.21px;width:2000px;text-align:center;font-size:17px;line-height:17px;font-weight:normal;color:#fff;"><span style="transform:scaleX(0.9000);transform-origin:50% 0">НОН КУЛЧА</span></div>
<div style="left:1030px;top:839px;width:105px;height:60px;background:#b1a0c7;"></div>
<div class="t" style="left:82.50px;top:851.71px;width:2000px;text-align:center;font-size:17px;line-height:17px;font-weight:normal;color:#222;"><span style="transform:scaleX(0.9000);transform-origin:50% 0">ТВОРОГ</span></div>
<div class="t" style="left:82.50px;top:871.11px;width:2000px;text-align:center;font-size:17px;line-height:17px;font-weight:normal;color:#222;"><span style="transform:scaleX(0.9000);transform-origin:50% 0">ДОМАШ</span></div>
<div style="left:1144px;top:839px;width:105px;height:60px;background:#ffffff;"></div>
<div class="t" style="left:196.50px;top:861.21px;width:2000px;text-align:center;font-size:17px;line-height:17px;font-weight:normal;color:#222;"><span style="transform:scaleX(0.9000);transform-origin:50% 0">ТУХУМ 1300</span></div>
<div style="left:1258px;top:839px;width:105px;height:60px;background:#558ed5;"></div>
<div class="t" style="left:310.50px;top:851.71px;width:2000px;text-align:center;font-size:17px;line-height:17px;font-weight:normal;color:#222;"><span style="transform:scaleX(0.9000);transform-origin:50% 0">3 HUGGIES 3</span></div>
<div class="t" style="left:310.50px;top:871.11px;width:2000px;text-align:center;font-size:17px;line-height:17px;font-weight:normal;color:#222;"><span style="transform:scaleX(0.9000);transform-origin:50% 0">УЛ К МАЛ</span></div>
<div style="left:1372px;top:839px;width:105px;height:60px;background:#558ed5;"></div>
<div class="t" style="left:424.50px;top:851.71px;width:2000px;text-align:center;font-size:17px;line-height:17px;font-weight:normal;color:#222;"><span style="transform:scaleX(0.9000);transform-origin:50% 0">4 HUGGIES 4</span></div>
<div class="t" style="left:424.50px;top:871.11px;width:2000px;text-align:center;font-size:17px;line-height:17px;font-weight:normal;color:#222;"><span style="transform:scaleX(0.9000);transform-origin:50% 0">УЛ К МАЛЬ</span></div>
<div style="left:1486px;top:839px;width:105px;height:60px;background:#558ed5;"></div>
<div class="t" style="left:538.50px;top:851.71px;width:2000px;text-align:center;font-size:17px;line-height:17px;font-weight:normal;color:#222;"><span style="transform:scaleX(0.9000);transform-origin:50% 0">5 HUGGIES 5</span></div>
<div class="t" style="left:538.50px;top:871.11px;width:2000px;text-align:center;font-size:17px;line-height:17px;font-weight:normal;color:#222;"><span style="transform:scaleX(0.9000);transform-origin:50% 0">УЛ К МАЛЬ</span></div>
<div style="left:1600px;top:839px;width:219px;height:60px;background:#e6b9b8;"></div>
<div class="t" style="left:709.50px;top:861.21px;width:2000px;text-align:center;font-size:17px;line-height:17px;font-weight:normal;color:#222;"><span style="transform:scaleX(0.9000);transform-origin:50% 0">3 HUGGIES 3 УЛ К ДЕВОЧ</span></div>
<div style="left:4px;top:908px;width:333px;height:60px;background:#e6b9b8;"></div>
<div class="t" style="left:-829.50px;top:930.21px;width:2000px;text-align:center;font-size:17px;line-height:17px;font-weight:normal;color:#222;"><span style="transform:scaleX(0.9000);transform-origin:50% 0">4 HUGGIES 4 УЛ К ДЕВОЧ</span></div>
<div style="left:346px;top:908px;width:333px;height:60px;background:#e6b9b8;"></div>
<div class="t" style="left:-487.50px;top:930.21px;width:2000px;text-align:center;font-size:17px;line-height:17px;font-weight:normal;color:#222;"><span style="transform:scaleX(0.9000);transform-origin:50% 0">5 HUGGIES 5 УЛ К ДЕВОЧ</span></div>
<div style="left:688px;top:908px;width:219px;height:60px;background:#ee0000;"></div>
<div class="t" style="left:-202.50px;top:930.21px;width:2000px;text-align:center;font-size:17px;line-height:17px;font-weight:normal;color:#2a1515;"><span style="transform:scaleX(0.9000);transform-origin:50% 0">4 HUGGIES 4 CLASS</span></div>
<div style="left:916px;top:908px;width:219px;height:60px;background:#ee0000;"></div>
<div class="t" style="left:25.50px;top:930.21px;width:2000px;text-align:center;font-size:17px;line-height:17px;font-weight:normal;color:#2a1515;"><span style="transform:scaleX(0.9000);transform-origin:50% 0">5 HUGGIES 5 CLASS</span></div>
<div style="left:1144px;top:908px;width:105px;height:60px;background:#7f0000;"></div>
<div class="t" style="left:196.50px;top:920.71px;width:2000px;text-align:center;font-size:17px;line-height:17px;font-weight:normal;color:#fff;"><span style="transform:scaleX(0.9000);transform-origin:50% 0">ШАКАР</span></div>
<div class="t" style="left:196.50px;top:940.11px;width:2000px;text-align:center;font-size:17px;line-height:17px;font-weight:normal;color:#fff;"><span style="transform:scaleX(0.9000);transform-origin:50% 0">ХОРАЗМ КГ</span></div>
<div style="left:1258px;top:908px;width:105px;height:60px;background:#ffff00;"></div>
<div class="t" style="left:310.50px;top:930.21px;width:2000px;text-align:center;font-size:17px;line-height:17px;font-weight:normal;color:#222;"><span style="transform:scaleX(0.9000);transform-origin:50% 0">LALAKU 1</span></div>
<div style="left:1372px;top:908px;width:105px;height:60px;background:#ffff00;"></div>
<div class="t" style="left:424.50px;top:930.21px;width:2000px;text-align:center;font-size:17px;line-height:17px;font-weight:normal;color:#222;"><span style="transform:scaleX(0.9000);transform-origin:50% 0">LALAKU 2</span></div>
<div style="left:1486px;top:908px;width:105px;height:60px;background:#ffff00;"></div>
<div class="t" style="left:538.50px;top:920.71px;width:2000px;text-align:center;font-size:17px;line-height:17px;font-weight:normal;color:#222;"><span style="transform:scaleX(0.9000);transform-origin:50% 0">LALAKU</span></div>
<div class="t" style="left:538.50px;top:940.11px;width:2000px;text-align:center;font-size:17px;line-height:17px;font-weight:normal;color:#222;"><span style="transform:scaleX(0.9000);transform-origin:50% 0">ТРУСИКИ 3</span></div>
<div style="left:1600px;top:908px;width:105px;height:60px;background:#ffff00;"></div>
<div class="t" style="left:652.50px;top:930.21px;width:2000px;text-align:center;font-size:17px;line-height:17px;font-weight:normal;color:#222;"><span style="transform:scaleX(0.9000);transform-origin:50% 0">LALAKU 4</span></div>
<div style="left:1714px;top:908px;width:105px;height:60px;background:#ffff00;"></div>
<div class="t" style="left:766.50px;top:930.21px;width:2000px;text-align:center;font-size:17px;line-height:17px;font-weight:normal;color:#222;"><span style="transform:scaleX(0.9000);transform-origin:50% 0">LALAKU 5</span></div>
<div style="left:4px;top:977px;width:105px;height:60px;background:#ffff00;"></div>
<div class="t" style="left:-943.50px;top:999.21px;width:2000px;text-align:center;font-size:17px;line-height:17px;font-weight:normal;color:#222;"><span style="transform:scaleX(0.9000);transform-origin:50% 0">LALAKU 6</span></div>
<div style="left:118px;top:977px;width:105px;height:60px;background:#da9694;"></div>
<div class="t" style="left:-829.50px;top:989.71px;width:2000px;text-align:center;font-size:17px;line-height:17px;font-weight:normal;color:#222;"><span style="transform:scaleX(0.9000);transform-origin:50% 0">LALAKU</span></div>
<div class="t" style="left:-829.50px;top:1009.11px;width:2000px;text-align:center;font-size:17px;line-height:17px;font-weight:normal;color:#222;"><span style="transform:scaleX(0.9000);transform-origin:50% 0">ДЕВОЧКАМ</span></div>
<div style="left:232px;top:977px;width:333px;height:60px;background:#da9694;"></div>
<div class="t" style="left:-601.50px;top:999.21px;width:2000px;text-align:center;font-size:17px;line-height:17px;font-weight:normal;color:#222;"><span style="transform:scaleX(0.9000);transform-origin:50% 0">LALAKU ДЕВОЧКАМ 4</span></div>
<div style="left:574px;top:977px;width:219px;height:60px;background:#da9694;"></div>
<div class="t" style="left:-316.50px;top:999.21px;width:2000px;text-align:center;font-size:17px;line-height:17px;font-weight:normal;color:#222;"><span style="transform:scaleX(0.9000);transform-origin:50% 0">LALAKU ДЕВОЧКАМ 5</span></div>
<div style="left:802px;top:977px;width:333px;height:60px;background:#da9694;"></div>
<div class="t" style="left:-31.50px;top:999.21px;width:2000px;text-align:center;font-size:17px;line-height:17px;font-weight:normal;color:#222;"><span style="transform:scaleX(0.9000);transform-origin:50% 0">LALAKU ДЕВОЧКАМ 6</span></div>
<div style="left:1144px;top:977px;width:105px;height:60px;background:#558ed5;"></div>
<div class="t" style="left:196.50px;top:989.71px;width:2000px;text-align:center;font-size:17px;line-height:17px;font-weight:normal;color:#222;"><span style="transform:scaleX(0.9000);transform-origin:50% 0">LALAKU</span></div>
<div class="t" style="left:196.50px;top:1009.11px;width:2000px;text-align:center;font-size:17px;line-height:17px;font-weight:normal;color:#222;"><span style="transform:scaleX(0.9000);transform-origin:50% 0">МАЛЬЧИКА</span></div>
<div style="left:1258px;top:977px;width:105px;height:60px;background:#558ed5;"></div>
<div class="t" style="left:310.50px;top:989.71px;width:2000px;text-align:center;font-size:17px;line-height:17px;font-weight:normal;color:#222;"><span style="transform:scaleX(0.9000);transform-origin:50% 0">LALAKU</span></div>
<div class="t" style="left:310.50px;top:1009.11px;width:2000px;text-align:center;font-size:17px;line-height:17px;font-weight:normal;color:#222;"><span style="transform:scaleX(0.9000);transform-origin:50% 0">МАЛЬЧИКА</span></div>
<div style="left:1372px;top:977px;width:105px;height:60px;background:#558ed5;"></div>
<div class="t" style="left:424.50px;top:989.71px;width:2000px;text-align:center;font-size:17px;line-height:17px;font-weight:normal;color:#222;"><span style="transform:scaleX(0.9000);transform-origin:50% 0">LALAKU</span></div>
<div class="t" style="left:424.50px;top:1009.11px;width:2000px;text-align:center;font-size:17px;line-height:17px;font-weight:normal;color:#222;"><span style="transform:scaleX(0.9000);transform-origin:50% 0">МАЛЬЧИКА</span></div>
<div style="left:1486px;top:977px;width:333px;height:60px;background:#558ed5;"></div>
<div class="t" style="left:652.50px;top:999.21px;width:2000px;text-align:center;font-size:17px;line-height:17px;font-weight:normal;color:#222;"><span style="transform:scaleX(0.9000);transform-origin:50% 0">LALAKU МАЛЬЧИКАМ 6</span></div>
<div style="left:4px;top:1046px;width:333px;height:60px;background:#00b050;"></div>
<div class="t" style="left:-829.50px;top:1068.21px;width:2000px;text-align:center;font-size:17px;line-height:17px;font-weight:normal;color:#222;"><span style="transform:scaleX(0.9000);transform-origin:50% 0">МЕГАБАЙТ КУРТ ШТ</span></div>
<div style="left:346px;top:1046px;width:105px;height:60px;background:#808080;"></div>
<div class="t" style="left:-601.50px;top:1068.21px;width:2000px;text-align:center;font-size:17px;line-height:17px;font-weight:normal;color:#fff;"><span style="transform:scaleX(0.9000);transform-origin:50% 0">СУТ  1Л</span></div>
<div style="left:460px;top:1046px;width:105px;height:60px;background:#595959;"></div>
<div class="t" style="left:-487.50px;top:1068.21px;width:2000px;text-align:center;font-size:17px;line-height:17px;font-weight:normal;color:#fff;"><span style="transform:scaleX(0.9000);transform-origin:50% 0">СУТ 1.5 Л</span></div>
<div style="left:574px;top:1046px;width:219px;height:60px;background:#3cb371;"></div>
<div class="t" style="left:-316.50px;top:1058.71px;width:2000px;text-align:center;font-size:17px;line-height:17px;font-weight:normal;color:#222;"><span style="transform:scaleX(0.9000);transform-origin:50% 0">КАЙМАК ТЕВАБОШИ 45%</span></div>
<div class="t" style="left:-316.50px;top:1078.11px;width:2000px;text-align:center;font-size:17px;line-height:17px;font-weight:normal;color:#222;"><span style="transform:scaleX(0.9000);transform-origin:50% 0">200Г</span></div>
<div style="left:802px;top:1046px;width:219px;height:60px;background:#3cb371;"></div>
<div class="t" style="left:-88.50px;top:1068.21px;width:2000px;text-align:center;font-size:17px;line-height:17px;font-weight:normal;color:#222;"><span style="transform:scaleX(0.9000);transform-origin:50% 0">КЕФИР ТЕВАБОШИ 2,5%</span></div>
<div style="left:1030px;top:1046px;width:219px;height:60px;background:#1f497d;"></div>
<div class="t" style="left:139.50px;top:1068.21px;width:2000px;text-align:center;font-size:17px;line-height:17px;font-weight:normal;color:#fff;"><span style="transform:scaleX(0.9000);transform-origin:50% 0">ЖИЛЕТ BLUE 3</span></div>
<div style="left:1258px;top:1046px;width:219px;height:60px;background:#ffc000;"></div>
<div class="t" style="left:367.50px;top:1068.21px;width:2000px;text-align:center;font-size:17px;line-height:17px;font-weight:normal;color:#222;"><span style="transform:scaleX(0.9000);transform-origin:50% 0">PRIMA 2 ОРАНЖЕВ.  1ШТ</span></div>
<div style="left:1486px;top:1046px;width:333px;height:60px;background:#ffc000;"></div>
<div class="t" style="left:652.50px;top:1068.21px;width:2000px;text-align:center;font-size:17px;line-height:17px;font-weight:normal;color:#222;"><span style="transform:scaleX(0.9000);transform-origin:50% 0">PRIMA 3 ОРАНЖЕВ.  1ШТ</span></div>
<div style="left:4px;top:1115px;width:219px;height:60px;background:#ffc000;"></div>
<div class="t" style="left:-886.50px;top:1137.21px;width:2000px;text-align:center;font-size:17px;line-height:17px;font-weight:normal;color:#222;"><span style="transform:scaleX(0.9000);transform-origin:50% 0">PRIMA 4 ОРАНЖЕВ.  1ШТ</span></div>
<div style="left:232px;top:1115px;width:105px;height:60px;background:#ffc000;"></div>
<div class="t" style="left:-715.50px;top:1127.71px;width:2000px;text-align:center;font-size:17px;line-height:17px;font-weight:normal;color:#222;"><span style="transform:scaleX(0.9000);transform-origin:50% 0">PRIMA 5</span></div>
<div class="t" style="left:-715.50px;top:1147.11px;width:2000px;text-align:center;font-size:17px;line-height:17px;font-weight:normal;color:#222;"><span style="transform:scaleX(0.9000);transform-origin:50% 0">ОРАНЖЕВ.</span></div>
<div style="left:346px;top:1115px;width:333px;height:60px;background:#e6b9b8;"></div>
<div class="t" style="left:-487.50px;top:1137.21px;width:2000px;text-align:center;font-size:17px;line-height:17px;font-weight:normal;color:#222;"><span style="transform:scaleX(0.9000);transform-origin:50% 0">ПЕРСИЛ КАПСУЛА В УПАК 33  1ШТ</span></div>
<div style="left:688px;top:1115px;width:219px;height:60px;background:#92d050;"></div>
<div class="t" style="left:-202.50px;top:1127.71px;width:2000px;text-align:center;font-size:17px;line-height:17px;font-weight:normal;color:#222;"><span style="transform:scaleX(0.9000);transform-origin:50% 0">ARIEL КАПСУЛА ДЛЯ</span></div>
<div class="t" style="left:-202.50px;top:1147.11px;width:2000px;text-align:center;font-size:17px;line-height:17px;font-weight:normal;color:#222;"><span style="transform:scaleX(0.9000);transform-origin:50% 0">СТИРКИ</span></div>
<div style="left:916px;top:1115px;width:219px;height:60px;background:#b1a0c7;"></div>
<div class="t" style="left:25.50px;top:1137.21px;width:2000px;text-align:center;font-size:17px;line-height:17px;font-weight:normal;color:#222;"><span style="transform:scaleX(0.9000);transform-origin:50% 0">LENOR КАПСУЛА  ШТ</span></div>
<div style="left:1144px;top:1115px;width:219px;height:60px;background:#366092;"></div>
<div class="t" style="left:253.50px;top:1137.21px;width:2000px;text-align:center;font-size:17px;line-height:17px;font-weight:normal;color:#fff;"><span style="transform:scaleX(0.9000);transform-origin:50% 0">TIDE КАПСУЛА COLOR</span></div>
<div style="left:1372px;top:1115px;width:333px;height:60px;background:#ee0000;"></div>
<div class="t" style="left:538.50px;top:1137.21px;width:2000px;text-align:center;font-size:17px;line-height:17px;font-weight:normal;color:#2a1515;"><span style="transform:scaleX(0.9000);transform-origin:50% 0">PERWOLL КАПСУЛА ШТ</span></div>
<div style="left:1714px;top:1115px;width:105px;height:60px;background:#4b0082;"></div>
<div class="t" style="left:766.50px;top:1137.21px;width:2000px;text-align:center;font-size:17px;line-height:17px;font-weight:normal;color:#fff;"><span style="transform:scaleX(0.9000);transform-origin:50% 0">УЙ НОН</span></div>
<div style="left:4px;top:1184px;width:105px;height:60px;background:#00ffff;"></div>
<div class="t" style="left:-943.50px;top:1196.71px;width:2000px;text-align:center;font-size:17px;line-height:17px;font-weight:normal;color:#222;"><span style="transform:scaleX(0.9000);transform-origin:50% 0">КЕФИР</span></div>
<div class="t" style="left:-943.50px;top:1216.11px;width:2000px;text-align:center;font-size:17px;line-height:17px;font-weight:normal;color:#222;"><span style="transform:scaleX(0.9000);transform-origin:50% 0">ДОБРАЯ</span></div>
<div style="left:118px;top:1184px;width:333px;height:60px;background:#00ff00;"></div>
<div class="t" style="left:-715.50px;top:1206.21px;width:2000px;text-align:center;font-size:17px;line-height:17px;font-weight:normal;color:#222;"><span style="transform:scaleX(0.9000);transform-origin:50% 0">ОДНОРАЗОВЫЙ СТАКАН</span></div>
<div style="left:460px;top:1184px;width:105px;height:60px;background:#00ffff;"></div>
<div class="t" style="left:-487.50px;top:1196.71px;width:2000px;text-align:center;font-size:17px;line-height:17px;font-weight:normal;color:#222;"><span style="transform:scaleX(0.9000);transform-origin:50% 0">КАПСУЛА</span></div>
<div class="t" style="left:-487.50px;top:1216.11px;width:2000px;text-align:center;font-size:17px;line-height:17px;font-weight:normal;color:#222;"><span style="transform:scaleX(0.9000);transform-origin:50% 0">CALGON</span></div>
<div style="left:574px;top:1184px;width:219px;height:60px;background:#48d1cc;"></div>
<div class="t" style="left:-316.50px;top:1196.71px;width:2000px;text-align:center;font-size:17px;line-height:17px;font-weight:normal;color:#222;"><span style="transform:scaleX(0.9000);transform-origin:50% 0">FRESHBOOM ЖЕВАТ</span></div>
<div class="t" style="left:-316.50px;top:1216.11px;width:2000px;text-align:center;font-size:17px;line-height:17px;font-weight:normal;color:#222;"><span style="transform:scaleX(0.9000);transform-origin:50% 0">РЕЗИНКА</span></div>
<div style="left:802px;top:1184px;width:105px;height:60px;background:#000080;"></div>
<div class="t" style="left:-145.50px;top:1196.71px;width:2000px;text-align:center;font-size:17px;line-height:17px;font-weight:normal;color:#fff;"><span style="transform:scaleX(0.9000);transform-origin:50% 0">СТАКАН</span></div>
<div class="t" style="left:-145.50px;top:1216.11px;width:2000px;text-align:center;font-size:17px;line-height:17px;font-weight:normal;color:#fff;"><span style="transform:scaleX(0.9000);transform-origin:50% 0">ПВХ</span></div>
<div style="left:916px;top:1184px;width:219px;height:60px;background:#d3d3d3;"></div>
<div class="t" style="left:25.50px;top:1196.71px;width:2000px;text-align:center;font-size:17px;line-height:17px;font-weight:normal;color:#222;"><span style="transform:scaleX(0.9000);transform-origin:50% 0">ПАКЕТ ТОШКЕНТ МАРКЕТ</span></div>
<div class="t" style="left:25.50px;top:1216.11px;width:2000px;text-align:center;font-size:17px;line-height:17px;font-weight:normal;color:#222;"><span style="transform:scaleX(0.9000);transform-origin:50% 0">КАТТА</span></div>
<div style="left:1144px;top:1184px;width:219px;height:60px;background:#f5f5f5;"></div>
<div class="t" style="left:253.50px;top:1206.21px;width:2000px;text-align:center;font-size:17px;line-height:17px;font-weight:normal;color:#222;"><span style="transform:scaleX(0.9000);transform-origin:50% 0">ПАКЕТ 5КГ 300СУМ</span></div>
<div style="left:1372px;top:1184px;width:333px;height:60px;background:#d3d3d3;"></div>
<div class="t" style="left:538.50px;top:1206.21px;width:2000px;text-align:center;font-size:17px;line-height:17px;font-weight:normal;color:#222;"><span style="transform:scaleX(0.9000);transform-origin:50% 0">ЗАПАС КУЛЛЕР 20Л</span></div>
<div style="left:4px;top:1253px;width:219px;height:60px;background:#d3d3d3;"></div>
<div class="t" style="left:-886.50px;top:1275.21px;width:2000px;text-align:center;font-size:17px;line-height:17px;font-weight:normal;color:#222;"><span style="transform:scaleX(0.9000);transform-origin:50% 0">КИР СОВУН УРГЕНЧ</span></div>
<div style="left:232px;top:1253px;width:333px;height:60px;background:#d3d3d3;"></div>
<div class="t" style="left:-601.50px;top:1275.21px;width:2000px;text-align:center;font-size:17px;line-height:17px;font-weight:normal;color:#222;"><span style="transform:scaleX(0.9000);transform-origin:50% 0">КОРЕЙСКИЙ КАРОМ САЛАТ КИЧИК ШТ</span></div>
<div style="left:574px;top:1253px;width:219px;height:60px;background:#d3d3d3;"></div>
<div class="t" style="left:-316.50px;top:1265.71px;width:2000px;text-align:center;font-size:17px;line-height:17px;font-weight:normal;color:#222;"><span style="transform:scaleX(0.9000);transform-origin:50% 0">КОРЕЙСКИЙ КАРОМ САЛАТ</span></div>
<div class="t" style="left:-316.50px;top:1285.11px;width:2000px;text-align:center;font-size:17px;line-height:17px;font-weight:normal;color:#222;"><span style="transform:scaleX(0.9000);transform-origin:50% 0">КАТТА ШТ</span></div>
<div style="left:802px;top:1253px;width:219px;height:60px;background:#d3d3d3;"></div>
<div class="t" style="left:-88.50px;top:1265.71px;width:2000px;text-align:center;font-size:17px;line-height:17px;font-weight:normal;color:#222;"><span style="transform:scaleX(0.9000);transform-origin:50% 0">BULUT ТУАЛЕТНАЯ БУМАГА</span></div>
<div class="t" style="left:-88.50px;top:1285.11px;width:2000px;text-align:center;font-size:17px;line-height:17px;font-weight:normal;color:#222;"><span style="transform:scaleX(0.9000);transform-origin:50% 0">АРОМА 8ШТ</span></div>
<div style="left:1030px;top:1253px;width:333px;height:60px;background:#d3d3d3;"></div>
<div class="t" style="left:196.50px;top:1275.21px;width:2000px;text-align:center;font-size:17px;line-height:17px;font-weight:normal;color:#222;"><span style="transform:scaleX(0.9000);transform-origin:50% 0">КУКУРУЗ CRISP 240Г</span></div>
<div style="left:1372px;top:1253px;width:333px;height:60px;background:#48d1cc;"></div>
<div class="t" style="left:538.50px;top:1275.21px;width:2000px;text-align:center;font-size:17px;line-height:17px;font-weight:normal;color:#222;"><span style="transform:scaleX(0.9000);transform-origin:50% 0">УЙ НОН 5000</span></div>
<div style="left:4px;top:1322px;width:219px;height:60px;background:#696969;"></div>
<div class="t" style="left:-886.50px;top:1344.21px;width:2000px;text-align:center;font-size:17px;line-height:17px;font-weight:normal;color:#fff;"><span style="transform:scaleX(0.9000);transform-origin:50% 0">LOVE IS ЖЕВ.РЕЗ.  1ШТ</span></div>
<div style="left:232px;top:1322px;width:333px;height:60px;background:#000000;"></div>
<div class="t" style="left:-601.50px;top:1344.21px;width:2000px;text-align:center;font-size:17px;line-height:17px;font-weight:normal;color:#fff;"><span style="transform:scaleX(0.9000);transform-origin:50% 0">ХИТОЙ КАПСУЛА ШТ</span></div>
<div style="left:574px;top:1322px;width:333px;height:60px;background:#ffa07a;"></div>
<div class="t" style="left:-259.50px;top:1344.21px;width:2000px;text-align:center;font-size:17px;line-height:17px;font-weight:normal;color:#222;"><span style="transform:scaleX(0.9000);transform-origin:50% 0">NAZAR ЗЕВАЧКА</span></div>
<div style="left:1932px;top:222px;width:313px;height:75px;background:#dedede;border:2px solid #bcbcbc;box-sizing:border-box"></div>
<div class="t" style="left:2052.80px;top:246.77px;width:2000px;text-align:left;font-size:26.5px;line-height:26.5px;font-weight:bold;color:#0b830b;"><span style="transform:scaleX(1.0161);transform-origin:0 0">1 ШТ.</span></div>
<div style="left:1932px;top:298px;width:312px;height:727px;background:#ffffff;border:2px solid #bdbdbd;box-sizing:border-box"></div>
<div style="left:2035px;top:300px;width:2px;height:723px;background:#c6c6c6;"></div>
<div style="left:2139px;top:300px;width:2px;height:517px;background:#c6c6c6;"></div>
<div style="left:1934px;top:402px;width:309px;height:2px;background:#c6c6c6;"></div>
<div style="left:1934px;top:505px;width:309px;height:2px;background:#c6c6c6;"></div>
<div style="left:1934px;top:609px;width:309px;height:2px;background:#c6c6c6;"></div>
<div style="left:1934px;top:712px;width:309px;height:2px;background:#c6c6c6;"></div>
<div style="left:1934px;top:816px;width:309px;height:2px;background:#c6c6c6;"></div>
<div style="left:1934px;top:920px;width:103px;height:2px;background:#c6c6c6;"></div>
<div class="t" style="left:984.50px;top:439.88px;width:2000px;text-align:center;font-size:30.5px;line-height:30.5px;font-weight:bold;color:#8a8a8a;"><span style="transform:scaleX(1.0000);transform-origin:50% 0">7</span></div>
<div class="t" style="left:1087.50px;top:439.88px;width:2000px;text-align:center;font-size:30.5px;line-height:30.5px;font-weight:bold;color:#8a8a8a;"><span style="transform:scaleX(1.0000);transform-origin:50% 0">8</span></div>
<div class="t" style="left:1191.00px;top:439.88px;width:2000px;text-align:center;font-size:30.5px;line-height:30.5px;font-weight:bold;color:#8a8a8a;"><span style="transform:scaleX(1.0000);transform-origin:50% 0">9</span></div>
<div class="t" style="left:984.50px;top:543.38px;width:2000px;text-align:center;font-size:30.5px;line-height:30.5px;font-weight:bold;color:#8a8a8a;"><span style="transform:scaleX(1.0000);transform-origin:50% 0">4</span></div>
<div class="t" style="left:1087.50px;top:543.38px;width:2000px;text-align:center;font-size:30.5px;line-height:30.5px;font-weight:bold;color:#8a8a8a;"><span style="transform:scaleX(1.0000);transform-origin:50% 0">5</span></div>
<div class="t" style="left:1191.00px;top:543.38px;width:2000px;text-align:center;font-size:30.5px;line-height:30.5px;font-weight:bold;color:#8a8a8a;"><span style="transform:scaleX(1.0000);transform-origin:50% 0">6</span></div>
<div class="t" style="left:984.50px;top:646.88px;width:2000px;text-align:center;font-size:30.5px;line-height:30.5px;font-weight:bold;color:#8a8a8a;"><span style="transform:scaleX(1.0000);transform-origin:50% 0">1</span></div>
<div class="t" style="left:1087.50px;top:646.88px;width:2000px;text-align:center;font-size:30.5px;line-height:30.5px;font-weight:bold;color:#8a8a8a;"><span style="transform:scaleX(1.0000);transform-origin:50% 0">2</span></div>
<div class="t" style="left:1191.00px;top:646.88px;width:2000px;text-align:center;font-size:30.5px;line-height:30.5px;font-weight:bold;color:#8a8a8a;"><span style="transform:scaleX(1.0000);transform-origin:50% 0">3</span></div>
<div class="t" style="left:1087.50px;top:750.38px;width:2000px;text-align:center;font-size:30.5px;line-height:30.5px;font-weight:bold;color:#8a8a8a;"><span style="transform:scaleX(1.0000);transform-origin:50% 0">0</span></div>
<div class="t" style="left:1087.50px;top:336.88px;width:2000px;text-align:center;font-size:30.5px;line-height:30.5px;font-weight:bold;color:#8a8a8a;"><span style="transform:scaleX(1.0000);transform-origin:50% 0">-</span></div>
<div style="left:1975.5px;top:351px;width:18px;height:3px;background:#8a8a8a;"></div>
<div style="left:1983px;top:343.5px;width:3px;height:18px;background:#8a8a8a;"></div>
<svg style="left:2178px;top:337px" width="30" height="30" viewBox="0 0 30 30"><path d="M3.5 3.5L26.5 26.5M26.5 3.5L3.5 26.5" stroke="#e0623e" stroke-width="3.6"/></svg>
<svg style="left:1960px;top:748px" width="44" height="36" viewBox="0 0 44 36"><path d="M39.5 3.5V28.5H6" fill="none" stroke="#808080" stroke-width="2.8"/><path d="M15 20L5 28.5L15 37" fill="none" stroke="#808080" stroke-width="3.2"/></svg>
<svg style="left:2170px;top:745px" width="45" height="40" viewBox="2170 745 45 40"><path d="M2181.2 769.7L2196.1 754.8L2202.7 761.5L2191.3 773.7H2185.2Z" fill="#8a8a8a"/><path d="M2192.1 767.6L2199.3 759.4L2202.7 761.5L2196.6 769L2192.9 772.5Z" fill="#404040"/><path d="M2181.2 769.7L2188.6 763.6L2191.3 767.6L2185.2 773.7Z" fill="#b0b0b0"/><path d="M2185.2 773.7L2191.3 767.6L2192.9 769.5L2191.3 773.7Z" fill="#6a6a6a"/></svg>
<svg style="left:1955px;top:840px" width="60" height="56" viewBox="0 0 60 56"><circle cx="20" cy="19" r="15" fill="#ecc479"/><text x="12.5" y="27" font-family="Liberation Sans" font-weight="bold" font-size="20" fill="#fff">€</text><circle cx="37" cy="36" r="16" fill="#fff"/><circle cx="37" cy="36" r="14.5" fill="#72a592"/><text x="29" y="45" font-family="Liberation Sans" font-weight="bold" font-size="24" fill="#fff">$</text></svg>
<svg style="left:1957px;top:954px" width="56" height="38" viewBox="0 0 56 38"><rect x="1.8" y="2" width="50" height="33" rx="4" fill="#f8f8f8" stroke="#6a6a6a" stroke-width="1.7"/><rect x="6" y="7" width="8" height="6" fill="#e8b830" stroke="#7a5a10" stroke-width="0.8"/><path d="M29 7.5h14" stroke="#aaa" stroke-width="1.6"/><path d="M6 18.5h6M14 18.5h6M22 18.5h6M30 18.5h6" stroke="#555" stroke-width="1.8"/><path d="M6 24h18" stroke="#888" stroke-width="1.4"/><circle cx="37.5" cy="28" r="3.8" fill="#e63a2a"/><circle cx="43" cy="28" r="3.8" fill="#f5c400" opacity="0.9"/></svg>
<svg style="left:2116px;top:900px" width="48" height="40" viewBox="0 0 48 40"><path d="M5 20L18 33.5L44 7" fill="none" stroke="#74ab96" stroke-width="4.6"/></svg>
<svg style="left:1965px;top:1290px;overflow:visible" width="260" height="180" viewBox="0 0 260 180"><path d="M15.4 8.2H40.1V47C40.1 63 30 73.5 16 73.5H7.7L12.6 54.9C17.5 54.9 20.9 51.5 20.9 47.2V25.2H15.4Z"/><path d="M43.9 8.2H88.4V26.9H62.6V33.5H84V48.3H62.6V54.3H88.4V73.5H43.9Z"/><path d="M92.7 8.2H136.6V26.9H124.6V73.5H105.4V26.9H92.7Z"/><path fill-rule="evenodd" d="M7.7 92.2H30C45 92.2 56 103 56 118C56 133 45 143.8 30 143.8H26.3V157H7.7Z M26.3 111.4H31C34.5 111.4 37.3 114.5 37.3 118C37.3 121.5 34.5 124.6 31 124.6H26.3Z"/><ellipse cx="91.6" cy="124.6" rx="24.2" ry="24.4" fill="none" stroke="#000" stroke-width="19.2"/><path d="M164.6 102.4C158 100 152 100 146 100.5C138 101 134 104 134 108C134 115 142 119 152 122C162 125 161.8 131 161.8 137C161.8 144 154 149 146 149C140 149 133 147 127.5 143.5" fill="none" stroke="#000" stroke-width="18.5"/><rect x="200.5" y="-9" width="6.8" height="181.7"/><rect x="210.7" y="-9" width="6.8" height="181.7"/><rect x="220.9" y="-9" width="6.8" height="181.7"/><rect x="231.1" y="-9" width="6.8" height="181.7"/><rect x="241.3" y="-9" width="6.8" height="181.7"/></svg>
<div style="left:0px;top:1464px;width:2255px;height:39px;background:#474747;"></div>
<div style="left:0px;top:1464px;width:1px;height:39px;background:#6a6a6a;"></div>
<div class="t" style="left:10.00px;top:1474.87px;width:2000px;text-align:left;font-size:17.4px;line-height:17.4px;font-weight:normal;color:#dcdcdc;"><span style="transform:scaleX(0.9572);transform-origin:0 0">Пользователь:</span></div>
<div class="t" style="left:150.00px;top:1474.87px;width:2000px;text-align:left;font-size:17.4px;line-height:17.4px;font-weight:normal;color:#dcdcdc;"><span style="transform:scaleX(1.0000);transform-origin:0 0">1</span></div>
<div style="left:172px;top:1470px;width:1px;height:28px;background:#5c5c5c;"></div>
<div class="t" style="left:187.90px;top:1474.87px;width:2000px;text-align:left;font-size:17.4px;line-height:17.4px;font-weight:bold;color:#f0f0f0;"><span style="transform:scaleX(0.9862);transform-origin:0 0">Новый чек: F1; Оплата чека: F4(Тер. F2, Нал. F3); Удалить чек: F9; Обновить: F5; Поиск: F12; Возврат: F8;</span></div>
<div class="t" style="left:1497.80px;top:1474.87px;width:2000px;text-align:left;font-size:17.4px;line-height:17.4px;font-weight:normal;color:#dcdcdc;"><span style="transform:scaleX(0.8989);transform-origin:0 0">Версия:</span></div>
<div class="t" style="left:1577.60px;top:1474.87px;width:2000px;text-align:left;font-size:17.4px;line-height:17.4px;font-weight:normal;color:#dcdcdc;"><span style="transform:scaleX(1.0130);transform-origin:0 0">2.5.5.5</span></div>
<div style="left:1646px;top:1470px;width:1px;height:28px;background:#5c5c5c;"></div>
<div class="t" style="left:1660.00px;top:1474.87px;width:2000px;text-align:left;font-size:17.4px;line-height:17.4px;font-weight:normal;color:#dcdcdc;"><span style="transform:scaleX(0.9252);transform-origin:0 0">Лицензия:</span></div>
<div class="t" style="left:1759.70px;top:1474.87px;width:2000px;text-align:left;font-size:17.4px;line-height:17.4px;font-weight:bold;color:#f0f0f0;"><span style="transform:scaleX(0.9678);transform-origin:0 0">JetPOS</span></div>
<div style="left:1833px;top:1470px;width:1px;height:28px;background:#5c5c5c;"></div>
<div class="t" style="left:1847.60px;top:1474.87px;width:2000px;text-align:left;font-size:17.4px;line-height:17.4px;font-weight:normal;color:#dcdcdc;"><span style="transform:scaleX(0.9488);transform-origin:0 0">до:</span></div>
<div class="t" style="left:1896.00px;top:1474.87px;width:2000px;text-align:left;font-size:17.4px;line-height:17.4px;font-weight:normal;color:#dcdcdc;"><span style="transform:scaleX(1.0000);transform-origin:0 0">~</span></div>
<div style="left:1921px;top:1470px;width:1px;height:28px;background:#5c5c5c;"></div>
<div class="t" style="left:1934.40px;top:1474.87px;width:2000px;text-align:left;font-size:17.4px;line-height:17.4px;font-weight:normal;color:#dcdcdc;"><span style="transform:scaleX(0.9870);transform-origin:0 0">Техподдержка:</span></div>
<div class="t" style="left:2075.60px;top:1474.87px;width:2000px;text-align:left;font-size:17.4px;line-height:17.4px;font-weight:normal;color:#dcdcdc;"><span style="transform:scaleX(0.8683);transform-origin:0 0">@JetPOS</span></div>
<div style="left:2158px;top:1470px;width:1px;height:28px;background:#5c5c5c;"></div>
<div class="t" style="left:2173.00px;top:1474.87px;width:2000px;text-align:left;font-size:17.4px;line-height:17.4px;font-weight:bold;color:#f0f0f0;"><span style="transform:scaleX(1.0308);transform-origin:0 0">11:38:55</span></div>
<svg style="left:0;top:90px" width="1400" height="70" viewBox="0 90 1400 70">
<!-- refresh -->
<path d="M61.3 127.4A12 12 0 1 0 55.6 137.6" fill="none" stroke="#76ab98" stroke-width="6"/>
<path d="M50.6 127.4H71.3L60.7 138.2z" fill="#76ab98"/>
<path d="M52 127.4L57.5 140" stroke="#dfdfdf" stroke-width="1.6"/>
<path d="M50.6 127.4H71.3L60.7 138.2z" fill="#76ab98"/>
<!-- plus -->
<rect x="124.5" y="124.7" width="33" height="5.7" fill="#4b84bf"/>
<rect x="138.2" y="111" width="5.7" height="33" fill="#4b84bf"/>
<!-- check -->
<path d="M206.5 127.5L220 141L245 115" fill="none" stroke="#74ab96" stroke-width="5.6"/>
<!-- more dots -->
<circle cx="300.8" cy="134.2" r="8.1" fill="#4b84bf"/>
<circle cx="317.9" cy="124.4" r="5.9" fill="#4b84bf"/>
<circle cx="303.6" cy="116.2" r="3.6" fill="#76ab98"/>
<circle cx="315.7" cy="137.3" r="2.3" fill="#76ab98"/>
<path d="M337 125.5h9l-4.5 5z" fill="#6e6e6e"/>
<!-- delete X -->
<path d="M389.5 113.5L417 141.5M417 113.5L389.5 141.5" stroke="#e0623e" stroke-width="5.2"/>
<!-- history -->
<rect x="469.5" y="115.4" width="2.7" height="24" fill="#858585"/>
<rect x="474.9" y="110.3" width="25" height="26" fill="#fff" stroke="#8a8a8a" stroke-width="1.7"/>
<path d="M480.5 114.8h14.2M480.5 117.8h14.2M480.5 120.8h14.2M480.5 123.9h14.2M480.5 126.8h14.2" stroke="#6f9bcb" stroke-width="1.9" stroke-linecap="round"/>
<path d="M469.3 143.5H500.7L512.8 131.2L511.2 129.2H494L492 131.9H479.9z" fill="#ecc371"/>
<!-- return -->
<path d="M561 123H576A9 9 0 0 1 576 141H570" fill="none" stroke="#4b84bf" stroke-width="6"/>
<path d="M552.5 123L563 112.6H569.4L559.5 123L569.4 133.3H563z" fill="#4b84bf"/>
<!-- postponed -->
<path d="M669.7 129A14.4 14.4 0 1 0 673.9 117.4" fill="none" stroke="#4b84bf" stroke-width="6.6"/>
<path d="M664.7 112.4L669.5 117L679 126.8H664.7z" fill="#4b84bf"/>
<path d="M684 118.3V129.2H691.4" fill="none" stroke="#4b84bf" stroke-width="3"/>
<path d="M714 125.5h9l-4.5 5z" fill="#6e6e6e"/>
<!-- binoculars -->
<path fill="#4b84bf" d="M805.5 108H811.3V112.6H814.1V123H817.4V112.6H820.6V108H826.3V112.6H829.3V122H830.8V127.6H833.9V146.7H819.1V133H812.8V146.7H798V127.6H801V122H802.5V112.6H805.5Z"/>
<rect x="814.4" y="126" width="2.8" height="1.6" fill="#a9c4de"/>
<g fill="#9cbbdb"><rect x="804" y="113.3" width="1.6" height="8.3"/><rect x="802.3" y="122.6" width="1.6" height="4.6"/><rect x="799.5" y="128.6" width="1.6" height="15.6"/>
<rect x="826" y="113.3" width="1.6" height="8.3"/><rect x="827.7" y="122.6" width="1.6" height="4.6"/><rect x="830.5" y="128.6" width="1.6" height="15.6"/></g>
<path d="M846 126h8.5l-4.25 4.3z" fill="#6e6e6e"/>
<!-- cart -->
<path d="M880.6 111.2H897L895.8 116.8H882z" fill="#e0623e"/>
<path d="M882 119.3H895.5L898.3 107.5Q898.8 105.6 900.5 105.6H903" fill="none" stroke="#e0623e" stroke-width="2"/>
<circle cx="885.6" cy="123.5" r="2.3" fill="#e0623e"/><circle cx="893.2" cy="123.5" r="2.3" fill="#e0623e"/>
<path d="M916.5 156h9l-4.5 5z" fill="#6e6e6e"/>
<!-- sigma -->
<path d="M1045 111H1074V116.5H1055L1066 126.5L1055 136.5H1074V142.4H1045V137.5L1057.5 126.5L1045 115.5z" fill="#808080"/>
</svg>

</body></html>
